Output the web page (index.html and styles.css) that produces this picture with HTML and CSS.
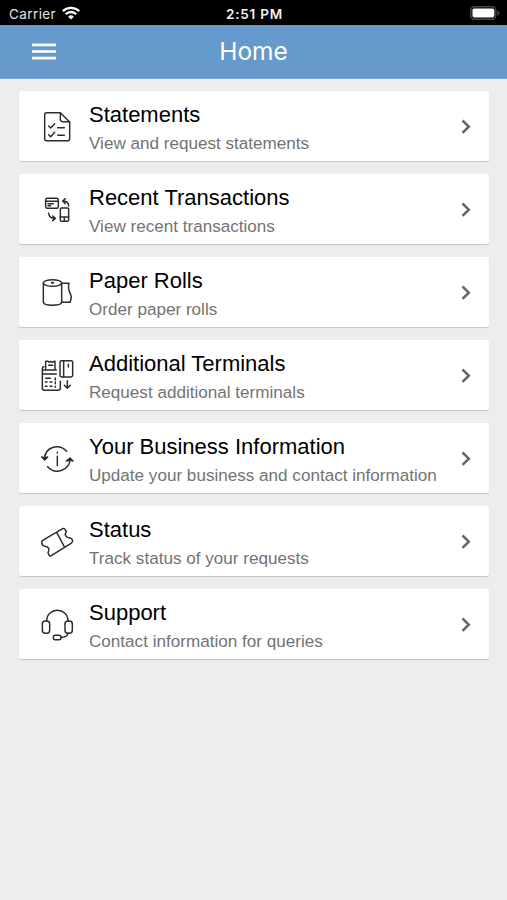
FILE: index.html
```html
<!DOCTYPE html>
<html lang="en">
<head>
<meta charset="utf-8">
<title>Home</title>
<link rel="stylesheet" href="styles.css">
</head>
<body>
<div class="status-bar">
  <div class="carrier"><span>Carrier</span>
    <svg class="wifi" viewBox="0 0 18 14" fill="none" stroke="#fff" stroke-width="2.3"><path d="M.8 5.1a11.8 11.8 0 0 1 16.4 0M3.7 8.2a7.5 7.5 0 0 1 10.6 0"/><path d="M9 13.6 6.1 10.7a4.1 4.1 0 0 1 5.8 0Z" fill="#fff" stroke="none"/></svg>
  </div>
  <span class="time">2:51 PM</span>
  <svg class="battery" viewBox="0 0 30 14"><rect x=".8" y=".8" width="25" height="12.4" rx="3.6" fill="#000" stroke="#484848" stroke-width="1.4"/><rect x="2.5" y="2.5" width="21.8" height="9" rx="1.8" fill="#fff"/><path d="M27.5 4.5q2 1 2 2.5t-2 2.5Z" fill="#484848"/></svg>
</div>
<header class="header">
  <svg class="menu" viewBox="0 0 24 17"><path d="M0 1.900h24M0 8.500h24M0 15.100h24" stroke="#fff" stroke-width="2.6"/></svg>
  <h1>Home</h1>
</header>
<main class="list">
  <a class="card">
    <svg class="icon" viewBox="27 27 108 108"><path d="M91 38H50q-6 0-6 6v72q0 6 6 6h63q6 0 6-6V66L91 38V58q0 7 7 7h21M56 78l6 6 12-13M56 104l6 6 12-13M83 83h20M83 106h20"/></svg>
    <div class="text"><h2>Statements</h2><p>View and request statements</p></div>
    <svg class="chevron" viewBox="0 0 10 16"><path d="m1.5 1.5 6.3 6.2-6.3 6.2"/></svg>
  </a>
  <a class="card">
    <svg class="icon" viewBox="27 27 108 108"><rect x="47" y="46" width="38" height="30" rx="5"/><path d="M47 55h38M54 62h16M54 68h8"/><rect x="91" y="75" width="25" height="40" rx="4"/><path d="M91 102h25M103 102v13M116 69q0-14-16-15M106 47l-8 7 8 8M56 91q2 15 17 15M68 99l8 7-8 7"/></svg>
    <div class="text"><h2>Recent Transactions</h2><p>View recent transactions</p></div>
    <svg class="chevron" viewBox="0 0 10 16"><path d="m1.5 1.5 6.3 6.2-6.3 6.2"/></svg>
  </a>
  <a class="card">
    <svg class="icon" viewBox="27 27 108 108"><ellipse cx="67.500" cy="51" rx="27.500" ry="10"/><path d="M40 51v57c0 13 55 13 55 0V51M95 52h22c-5 16 1 24 5 33 5 11-1 15-1 24H95"/><ellipse cx="67.500" cy="50.500" rx="3" ry="1"/></svg>
    <div class="text"><h2>Paper Rolls</h2><p>Order paper rolls</p></div>
    <svg class="chevron" viewBox="0 0 10 16"><path d="m1.500 1.500 6.300 6.200-6.300 6.200"/></svg>
  </a>
  <a class="card">
    <svg class="icon" viewBox="27 27 108 108"><path d="M47 61V37h7l3 3 5-3 5 3 5-3h3v24M56 49h12M42 53q-5 0-5 5v60q0 6 6 6h40q8 0 8-7V97M37 63h42M37 75h42M47 88h14M76 87v6M46 99h5M60 99h6M46 112h5M60 112h6M76 99v5M76 112v3"/><rect x="90" y="35" width="38" height="49" rx="5"/><path d="M101 35v49M115 46v8M112 95v22M103 109l9 9 9-9"/></svg>
    <div class="text"><h2>Additional Terminals</h2><p>Request additional terminals</p></div>
    <svg class="chevron" viewBox="0 0 10 16"><path d="m1.500 1.500 6.300 6.200-6.300 6.200"/></svg>
  </a>
  <a class="card">
    <svg class="icon" viewBox="27 27 108 108"><path d="M110 58C86 31 44 47 44 80M53 104c24 27 67 9 67-23M82 73v28M82 61v2"/><path class="solid" d="m35 75 9 9 9-9-9 3ZM109 87l11-9 9 9-9-3Z"/></svg>
    <div class="text"><h2>Your Business Information</h2><p>Update your business and contact information</p></div>
    <svg class="chevron" viewBox="0 0 10 16"><path d="m1.500 1.500 6.300 6.200-6.300 6.200"/></svg>
  </a>
  <a class="card">
    <svg class="icon" viewBox="27 27 108 108"><path d="M38 76 98 41q4-2 7 2l4 6c-6 9-3 18 8 19 7 1 10 5 11 9 0 4-2 6-5 8L64 122q-4 2-7-2l-3-7c6-10 2-18-9-19-6-1-9-5-10-11-1-4 0-5 3-7ZM80 52l24 45"/></svg>
    <div class="text"><h2>Status</h2><p>Track status of your requests</p></div>
    <svg class="chevron" viewBox="0 0 10 16"><path d="m1.500 1.500 6.300 6.200-6.300 6.200"/></svg>
  </a>
  <a class="card">
    <svg class="icon" viewBox="27 27 108 108"><path d="M50 70c0-44 64-44 64 0M114 106q-3 12-21 12"/><rect x="37" y="69" width="22" height="37" rx="9"/><rect x="105" y="69" width="22" height="37" rx="9"/><rect x="70" y="112" width="23" height="13" rx="6"/></svg>
    <div class="text"><h2>Support</h2><p>Contact information for queries</p></div>
    <svg class="chevron" viewBox="0 0 10 16"><path d="m1.500 1.500 6.300 6.200-6.300 6.200"/></svg>
  </a>
</main>
</body>
</html>
```
FILE: styles.css
```css
* { box-sizing: border-box; }
body { margin: 0; min-height: 900px; background: #ededed; font-family: "Liberation Sans", Arial, sans-serif; color: #000; }
h1, h2, p { margin: 0; font-weight: 400; white-space: nowrap; }
.status-bar { height: 25px; padding: 1px 7px 0 9px; background: #000; color: #fff; display: grid; grid-template-columns: 1fr auto 1fr; align-items: center; font-family: Inter, sans-serif; font-size: 13.5px; }
.carrier { display: flex; align-items: center; gap: 6px; color: #e4e4e4; letter-spacing: .4px; }
.carrier span { padding-top: 1px; }
.wifi { width: 18px; height: 14px; }
.time { font-weight: 600; font-size: 13.5px; letter-spacing: .8px; color: #f2f2f2; padding-top: 1px; }
.battery { width: 30px; height: 14px; justify-self: end; }
.header { height: 54px; padding: 0 32px; display: grid; grid-template-columns: 24px 1fr 24px; align-items: center; background: #6699cc; color: #fff; border-bottom: 1px solid #7eaada; }
.header h1 { text-align: center; font-family: Inter, sans-serif; font-size: 24.5px; line-height: 30px; padding-bottom: 2px; }
.menu { width: 24px; height: 17px; }
.list { padding: 12px 18px 0 19px; display: flex; flex-direction: column; gap: 13px; }
.card { height: 70px; padding: 2px 18px 0 20px; display: flex; align-items: center; background: #fff; border-radius: 2px; box-shadow: 0 1px 1px #c6c6c6; }
.icon { width: 36px; height: 36px; margin-right: 14px; flex: none; fill: none; stroke: #2b2b2b; stroke-width: 4.4; stroke-linecap: round; stroke-linejoin: round; }
.icon .solid { fill: #222; }
.text { flex: 1; padding-top: 4px; }
.text h2 { font-size: 22px; line-height: 28px; }
.text p { font-size: 17.1px; line-height: 29px; color: #737373; }
.chevron { width: 10px; height: 16px; fill: none; stroke: #666; stroke-width: 2.5; }
```
